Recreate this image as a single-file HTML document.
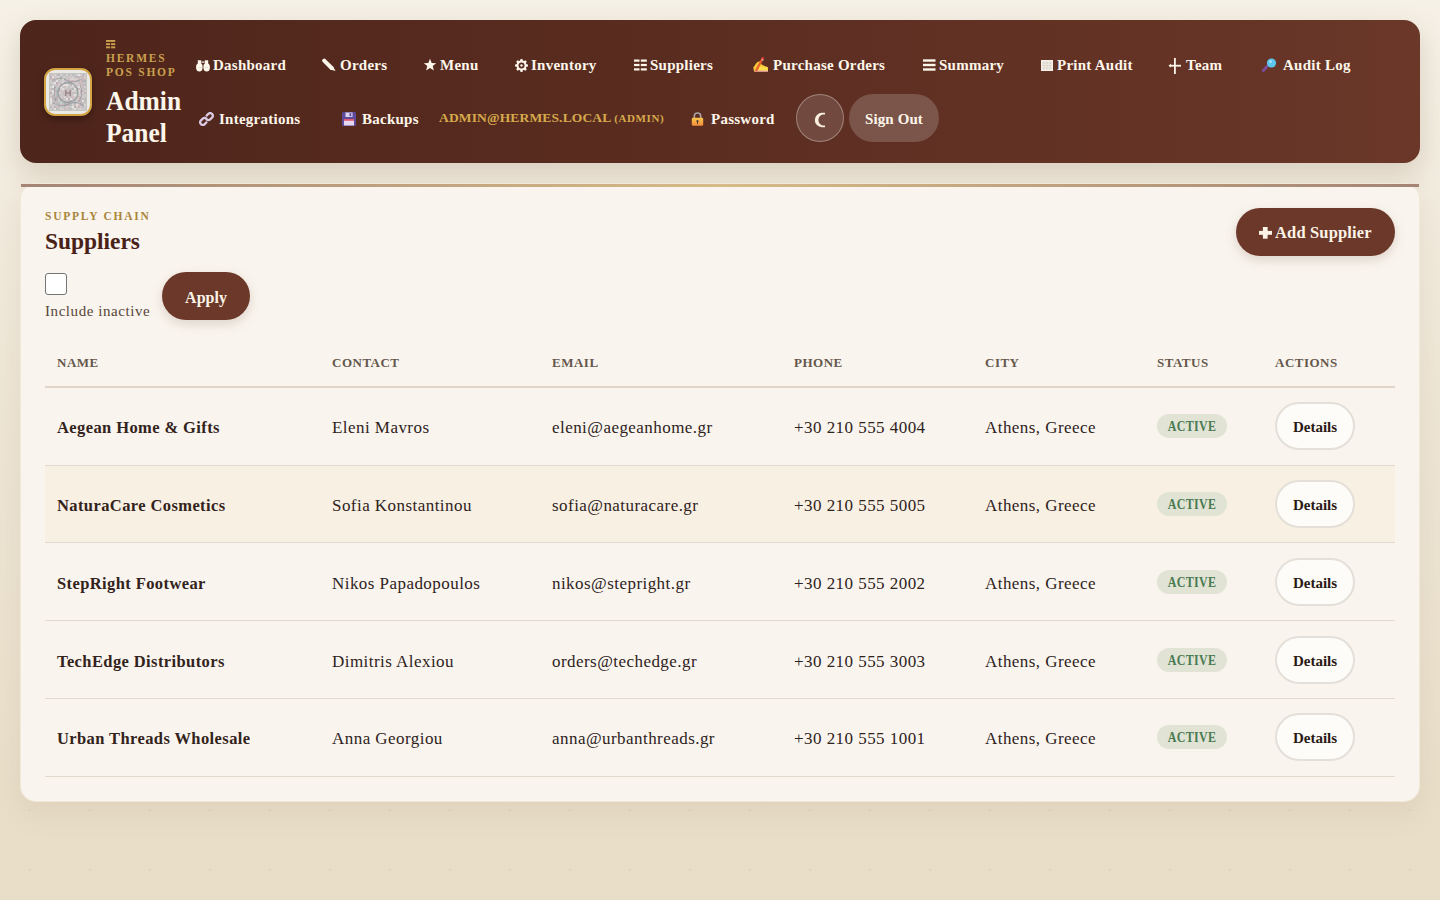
<!DOCTYPE html>
<html><head><meta charset="utf-8">
<style>
*{box-sizing:border-box;margin:0;padding:0}
html,body{width:1440px;height:900px;overflow:hidden}
body{font-family:"Liberation Serif",serif;position:relative;
background:linear-gradient(180deg,#f6f1e7 0%,#efe7d8 40%,#e8ddc6 100%);}
.dots{position:absolute;left:0;top:0;width:1440px;height:900px;
background-image:radial-gradient(circle at 30px 30px, rgba(150,120,80,0.09) 1px, transparent 1.6px);
background-size:60px 60px}
.hdr{position:absolute;left:20px;top:20px;width:1400px;height:143px;border-radius:16px;
background:linear-gradient(90deg,#4e251b 0%,#5a2c20 45%,#6a3729 100%);
box-shadow:0 10px 28px rgba(90,60,30,0.18)}
.abs{position:absolute;white-space:nowrap}
.logo{left:44px;top:68px;width:48px;height:48px;border:2px solid #d1a446;border-radius:11px;
background:#ebe9e3;box-shadow:0 3px 8px rgba(0,0,0,.35);overflow:hidden}
.logo svg{position:absolute;left:3px;top:3px}
.brand{color:#c9a04e;font-size:11.5px;letter-spacing:1.75px;font-weight:bold;line-height:14px}
.title{color:#fbf5ea;font-size:25.5px;font-weight:bold;line-height:32px;transform:scaleY(1.09);transform-origin:0 23px}
.nav{color:#fdf6ea;font-size:15px;font-weight:bold;letter-spacing:0.25px;line-height:18px}
.ic{position:absolute}
.email{color:#d6aa4c;font-size:13.5px;font-weight:bold;letter-spacing:0.15px;line-height:18px}
.email small{font-size:11px;letter-spacing:0.6px}
.moon{left:796px;top:94px;width:48px;height:48px;border-radius:50%;background:rgba(255,255,255,0.13);
border:1px solid rgba(255,255,255,0.32)}
.signout{left:849px;top:94px;width:90px;height:48px;border-radius:24px;background:rgba(255,255,255,0.18);
color:#fdf6ea;font-size:15px;font-weight:bold;letter-spacing:0.1px;line-height:50px;text-align:center}
.card{position:absolute;left:20px;top:183px;width:1400px;height:619px;border-radius:16px;border:1px solid rgba(236,226,208,0.7);
background:#f9f5ee;box-shadow:0 10px 30px rgba(120,90,50,0.10)}
.card:before{content:"";position:absolute;left:0;top:0;right:0;height:3px;
background:linear-gradient(90deg,#a48474 0%,#d6bb87 50%,#a48474 100%)}
.eyebrow{color:#a9843a;font-size:11.5px;font-weight:bold;letter-spacing:1.77px;line-height:14px}
.h1{color:#4a2117;font-size:23.4px;font-weight:bold;line-height:30px}
.chk{left:45px;top:273px;width:22px;height:22px;border:1px solid #767676;border-radius:3px;background:#fff}
.lbl{color:#574539;font-size:15px;letter-spacing:0.57px;line-height:18px}
.btn{background:#6b3829;color:#fbf3e6;font-weight:bold;text-align:center;border-radius:24px;
box-shadow:0 4px 12px rgba(107,56,41,0.18)}
.th{color:#66574d;font-size:13px;font-weight:bold;letter-spacing:0.5px;line-height:16px}
.line{position:absolute;left:45px;width:1350px;height:1px;background:#e1d9cd}
.name{color:#33231c;font-size:16.5px;font-weight:bold;letter-spacing:0.4px;line-height:20px}
.cell{color:#2f221c;font-size:17px;letter-spacing:0.45px;line-height:20px}
.badge{width:70px;height:24px;border-radius:12px;background:#e1e4d5;color:#4a7a52;font-size:12px;font-weight:bold;
letter-spacing:0.3px;line-height:24px;text-align:center}
.badge span{display:inline-block;transform:scaleY(1.15);transform-origin:50% 65%;position:relative;top:1px}
.det{width:80px;height:47.5px;border-radius:24px;border:2px solid #e4dfd8;background:#fefcf9;
color:#2a1a14;font-size:15px;font-weight:bold;line-height:46px;text-align:center}
</style></head>
<body>
<div class="dots"></div>
<div class="hdr"></div>
<div class="abs logo"><svg width="38" height="38" viewBox="0 0 38 38"><rect x="0.3" y="0.3" width="37.4" height="37.4" fill="#d3cecb"/><rect x="1" y="1" width="2" height="2" fill="#d2bec1"/><rect x="3" y="1" width="2" height="2" fill="#d2bec1"/><rect x="7" y="1" width="2" height="2" fill="#bfc5c6"/><rect x="9" y="1" width="2" height="2" fill="#bcb2b6"/><rect x="11" y="1" width="2" height="2" fill="#d9d3d2"/><rect x="13" y="1" width="2" height="2" fill="#bfc5c6"/><rect x="15" y="1" width="2" height="2" fill="#c6bcbe"/><rect x="17" y="1" width="2" height="2" fill="#d9d3d2"/><rect x="19" y="1" width="2" height="2" fill="#c4bdbf"/><rect x="21" y="1" width="2" height="2" fill="#cfc9c8"/><rect x="23" y="1" width="2" height="2" fill="#b5bfbc"/><rect x="25" y="1" width="2" height="2" fill="#bfc5c6"/><rect x="29" y="1" width="2" height="2" fill="#e6e3df"/><rect x="33" y="1" width="2" height="2" fill="#c0b8bc"/><rect x="35" y="1" width="2" height="2" fill="#ccc5c9"/><rect x="1" y="3" width="2" height="2" fill="#bcb2b6"/><rect x="3" y="3" width="2" height="2" fill="#e6e3df"/><rect x="5" y="3" width="2" height="2" fill="#ccc5c9"/><rect x="9" y="3" width="2" height="2" fill="#d9d3d2"/><rect x="11" y="3" width="2" height="2" fill="#aeb7b5"/><rect x="13" y="3" width="2" height="2" fill="#ccc5c9"/><rect x="17" y="3" width="2" height="2" fill="#bfc5c6"/><rect x="19" y="3" width="2" height="2" fill="#cfc9c8"/><rect x="21" y="3" width="2" height="2" fill="#ccc5c9"/><rect x="25" y="3" width="2" height="2" fill="#c6bcbe"/><rect x="27" y="3" width="2" height="2" fill="#c0b8bc"/><rect x="29" y="3" width="2" height="2" fill="#c0b8bc"/><rect x="31" y="3" width="2" height="2" fill="#c6bcbe"/><rect x="33" y="3" width="2" height="2" fill="#c6bcbe"/><rect x="1" y="5" width="2" height="2" fill="#c6bcbe"/><rect x="3" y="5" width="2" height="2" fill="#cbb9bc"/><rect x="5" y="5" width="2" height="2" fill="#cfc9c8"/><rect x="7" y="5" width="2" height="2" fill="#cfc9c8"/><rect x="11" y="5" width="2" height="2" fill="#b5bfbc"/><rect x="13" y="5" width="2" height="2" fill="#e6e3df"/><rect x="15" y="5" width="2" height="2" fill="#b5bfbc"/><rect x="17" y="5" width="2" height="2" fill="#cfc9c8"/><rect x="19" y="5" width="2" height="2" fill="#d2bec1"/><rect x="21" y="5" width="2" height="2" fill="#d9d3d2"/><rect x="23" y="5" width="2" height="2" fill="#d9d3d2"/><rect x="29" y="5" width="2" height="2" fill="#c6bcbe"/><rect x="33" y="5" width="2" height="2" fill="#cbb9bc"/><rect x="35" y="5" width="2" height="2" fill="#d2bec1"/><rect x="3" y="7" width="2" height="2" fill="#c9c3c7"/><rect x="5" y="7" width="2" height="2" fill="#c4bdbf"/><rect x="7" y="7" width="2" height="2" fill="#e2dfdb"/><rect x="9" y="7" width="2" height="2" fill="#bfc5c6"/><rect x="11" y="7" width="2" height="2" fill="#c9c3c7"/><rect x="15" y="7" width="2" height="2" fill="#c9c3c7"/><rect x="17" y="7" width="2" height="2" fill="#c9c3c7"/><rect x="19" y="7" width="2" height="2" fill="#c4bdbf"/><rect x="21" y="7" width="2" height="2" fill="#d2bec1"/><rect x="23" y="7" width="2" height="2" fill="#cbb9bc"/><rect x="25" y="7" width="2" height="2" fill="#cfc9c8"/><rect x="27" y="7" width="2" height="2" fill="#c0b8bc"/><rect x="29" y="7" width="2" height="2" fill="#b5bfbc"/><rect x="31" y="7" width="2" height="2" fill="#d2bec1"/><rect x="33" y="7" width="2" height="2" fill="#bcb2b6"/><rect x="35" y="7" width="2" height="2" fill="#aeb7b5"/><rect x="1" y="9" width="2" height="2" fill="#cfc9c8"/><rect x="5" y="9" width="2" height="2" fill="#e6e3df"/><rect x="7" y="9" width="2" height="2" fill="#bcb2b6"/><rect x="9" y="9" width="2" height="2" fill="#d2bec1"/><rect x="11" y="9" width="2" height="2" fill="#ccc5c9"/><rect x="13" y="9" width="2" height="2" fill="#e6e3df"/><rect x="15" y="9" width="2" height="2" fill="#ccc5c9"/><rect x="17" y="9" width="2" height="2" fill="#ccc5c9"/><rect x="19" y="9" width="2" height="2" fill="#b5bfbc"/><rect x="21" y="9" width="2" height="2" fill="#cbb9bc"/><rect x="25" y="9" width="2" height="2" fill="#ccc5c9"/><rect x="29" y="9" width="2" height="2" fill="#cbb9bc"/><rect x="31" y="9" width="2" height="2" fill="#c6bcbe"/><rect x="33" y="9" width="2" height="2" fill="#c9c3c7"/><rect x="35" y="9" width="2" height="2" fill="#bfc5c6"/><rect x="1" y="11" width="2" height="2" fill="#b5bfbc"/><rect x="5" y="11" width="2" height="2" fill="#ccc5c9"/><rect x="7" y="11" width="2" height="2" fill="#cbb9bc"/><rect x="11" y="11" width="2" height="2" fill="#cbb9bc"/><rect x="13" y="11" width="2" height="2" fill="#e6e3df"/><rect x="15" y="11" width="2" height="2" fill="#e2dfdb"/><rect x="17" y="11" width="2" height="2" fill="#e6e3df"/><rect x="21" y="11" width="2" height="2" fill="#c0b8bc"/><rect x="23" y="11" width="2" height="2" fill="#e6e3df"/><rect x="25" y="11" width="2" height="2" fill="#e2dfdb"/><rect x="27" y="11" width="2" height="2" fill="#c9c3c7"/><rect x="31" y="11" width="2" height="2" fill="#d2bec1"/><rect x="33" y="11" width="2" height="2" fill="#c6bcbe"/><rect x="35" y="11" width="2" height="2" fill="#c0b8bc"/><rect x="3" y="13" width="2" height="2" fill="#e6e3df"/><rect x="5" y="13" width="2" height="2" fill="#aeb7b5"/><rect x="7" y="13" width="2" height="2" fill="#c9c3c7"/><rect x="11" y="13" width="2" height="2" fill="#e6e3df"/><rect x="13" y="13" width="2" height="2" fill="#c9c3c7"/><rect x="15" y="13" width="2" height="2" fill="#d2bec1"/><rect x="19" y="13" width="2" height="2" fill="#bfc5c6"/><rect x="25" y="13" width="2" height="2" fill="#c6bcbe"/><rect x="29" y="13" width="2" height="2" fill="#e2dfdb"/><rect x="33" y="13" width="2" height="2" fill="#c6bcbe"/><rect x="1" y="15" width="2" height="2" fill="#d2bec1"/><rect x="3" y="15" width="2" height="2" fill="#aeb7b5"/><rect x="5" y="15" width="2" height="2" fill="#ccc5c9"/><rect x="7" y="15" width="2" height="2" fill="#bfc5c6"/><rect x="9" y="15" width="2" height="2" fill="#aeb7b5"/><rect x="13" y="15" width="2" height="2" fill="#e2dfdb"/><rect x="17" y="15" width="2" height="2" fill="#d2bec1"/><rect x="21" y="15" width="2" height="2" fill="#c0b8bc"/><rect x="23" y="15" width="2" height="2" fill="#aeb7b5"/><rect x="25" y="15" width="2" height="2" fill="#e6e3df"/><rect x="27" y="15" width="2" height="2" fill="#aeb7b5"/><rect x="29" y="15" width="2" height="2" fill="#cbb9bc"/><rect x="33" y="15" width="2" height="2" fill="#bfc5c6"/><rect x="35" y="15" width="2" height="2" fill="#c6bcbe"/><rect x="3" y="17" width="2" height="2" fill="#e2dfdb"/><rect x="5" y="17" width="2" height="2" fill="#cbb9bc"/><rect x="7" y="17" width="2" height="2" fill="#aeb7b5"/><rect x="9" y="17" width="2" height="2" fill="#c0b8bc"/><rect x="11" y="17" width="2" height="2" fill="#d2bec1"/><rect x="15" y="17" width="2" height="2" fill="#b5bfbc"/><rect x="23" y="17" width="2" height="2" fill="#e2dfdb"/><rect x="25" y="17" width="2" height="2" fill="#cfc9c8"/><rect x="27" y="17" width="2" height="2" fill="#c9c3c7"/><rect x="29" y="17" width="2" height="2" fill="#e2dfdb"/><rect x="31" y="17" width="2" height="2" fill="#c0b8bc"/><rect x="33" y="17" width="2" height="2" fill="#c6bcbe"/><rect x="1" y="19" width="2" height="2" fill="#bcb2b6"/><rect x="3" y="19" width="2" height="2" fill="#e2dfdb"/><rect x="5" y="19" width="2" height="2" fill="#ccc5c9"/><rect x="7" y="19" width="2" height="2" fill="#b5bfbc"/><rect x="9" y="19" width="2" height="2" fill="#d9d3d2"/><rect x="13" y="19" width="2" height="2" fill="#c6bcbe"/><rect x="17" y="19" width="2" height="2" fill="#b5bfbc"/><rect x="19" y="19" width="2" height="2" fill="#c0b8bc"/><rect x="23" y="19" width="2" height="2" fill="#c6bcbe"/><rect x="25" y="19" width="2" height="2" fill="#bfc5c6"/><rect x="27" y="19" width="2" height="2" fill="#b5bfbc"/><rect x="29" y="19" width="2" height="2" fill="#d9d3d2"/><rect x="31" y="19" width="2" height="2" fill="#cbb9bc"/><rect x="35" y="19" width="2" height="2" fill="#bcb2b6"/><rect x="3" y="21" width="2" height="2" fill="#c9c3c7"/><rect x="5" y="21" width="2" height="2" fill="#c9c3c7"/><rect x="7" y="21" width="2" height="2" fill="#b5bfbc"/><rect x="9" y="21" width="2" height="2" fill="#c9c3c7"/><rect x="11" y="21" width="2" height="2" fill="#c9c3c7"/><rect x="13" y="21" width="2" height="2" fill="#cfc9c8"/><rect x="15" y="21" width="2" height="2" fill="#c0b8bc"/><rect x="19" y="21" width="2" height="2" fill="#cfc9c8"/><rect x="25" y="21" width="2" height="2" fill="#e2dfdb"/><rect x="27" y="21" width="2" height="2" fill="#d9d3d2"/><rect x="33" y="21" width="2" height="2" fill="#c9c3c7"/><rect x="1" y="23" width="2" height="2" fill="#c9c3c7"/><rect x="3" y="23" width="2" height="2" fill="#c0b8bc"/><rect x="7" y="23" width="2" height="2" fill="#bcb2b6"/><rect x="9" y="23" width="2" height="2" fill="#d2bec1"/><rect x="13" y="23" width="2" height="2" fill="#ccc5c9"/><rect x="15" y="23" width="2" height="2" fill="#e2dfdb"/><rect x="17" y="23" width="2" height="2" fill="#c0b8bc"/><rect x="19" y="23" width="2" height="2" fill="#e2dfdb"/><rect x="21" y="23" width="2" height="2" fill="#c6bcbe"/><rect x="23" y="23" width="2" height="2" fill="#d2bec1"/><rect x="27" y="23" width="2" height="2" fill="#cfc9c8"/><rect x="29" y="23" width="2" height="2" fill="#cbb9bc"/><rect x="31" y="23" width="2" height="2" fill="#c4bdbf"/><rect x="35" y="23" width="2" height="2" fill="#cfc9c8"/><rect x="1" y="25" width="2" height="2" fill="#e6e3df"/><rect x="3" y="25" width="2" height="2" fill="#c0b8bc"/><rect x="5" y="25" width="2" height="2" fill="#aeb7b5"/><rect x="7" y="25" width="2" height="2" fill="#bcb2b6"/><rect x="11" y="25" width="2" height="2" fill="#b5bfbc"/><rect x="13" y="25" width="2" height="2" fill="#d2bec1"/><rect x="15" y="25" width="2" height="2" fill="#c9c3c7"/><rect x="17" y="25" width="2" height="2" fill="#e6e3df"/><rect x="19" y="25" width="2" height="2" fill="#bcb2b6"/><rect x="21" y="25" width="2" height="2" fill="#e6e3df"/><rect x="23" y="25" width="2" height="2" fill="#c9c3c7"/><rect x="25" y="25" width="2" height="2" fill="#cbb9bc"/><rect x="29" y="25" width="2" height="2" fill="#cbb9bc"/><rect x="31" y="25" width="2" height="2" fill="#bfc5c6"/><rect x="33" y="25" width="2" height="2" fill="#c6bcbe"/><rect x="35" y="25" width="2" height="2" fill="#b5bfbc"/><rect x="1" y="27" width="2" height="2" fill="#e6e3df"/><rect x="3" y="27" width="2" height="2" fill="#d2bec1"/><rect x="5" y="27" width="2" height="2" fill="#bcb2b6"/><rect x="7" y="27" width="2" height="2" fill="#c4bdbf"/><rect x="9" y="27" width="2" height="2" fill="#cfc9c8"/><rect x="11" y="27" width="2" height="2" fill="#b5bfbc"/><rect x="17" y="27" width="2" height="2" fill="#cfc9c8"/><rect x="19" y="27" width="2" height="2" fill="#c4bdbf"/><rect x="21" y="27" width="2" height="2" fill="#aeb7b5"/><rect x="25" y="27" width="2" height="2" fill="#bfc5c6"/><rect x="27" y="27" width="2" height="2" fill="#c9c3c7"/><rect x="29" y="27" width="2" height="2" fill="#cbb9bc"/><rect x="31" y="27" width="2" height="2" fill="#c0b8bc"/><rect x="33" y="27" width="2" height="2" fill="#e6e3df"/><rect x="35" y="27" width="2" height="2" fill="#c0b8bc"/><rect x="1" y="29" width="2" height="2" fill="#e2dfdb"/><rect x="3" y="29" width="2" height="2" fill="#b5bfbc"/><rect x="5" y="29" width="2" height="2" fill="#c9c3c7"/><rect x="7" y="29" width="2" height="2" fill="#c0b8bc"/><rect x="9" y="29" width="2" height="2" fill="#b5bfbc"/><rect x="13" y="29" width="2" height="2" fill="#b5bfbc"/><rect x="15" y="29" width="2" height="2" fill="#aeb7b5"/><rect x="17" y="29" width="2" height="2" fill="#cbb9bc"/><rect x="19" y="29" width="2" height="2" fill="#aeb7b5"/><rect x="21" y="29" width="2" height="2" fill="#cfc9c8"/><rect x="23" y="29" width="2" height="2" fill="#c9c3c7"/><rect x="25" y="29" width="2" height="2" fill="#aeb7b5"/><rect x="27" y="29" width="2" height="2" fill="#c9c3c7"/><rect x="31" y="29" width="2" height="2" fill="#c0b8bc"/><rect x="33" y="29" width="2" height="2" fill="#c4bdbf"/><rect x="35" y="29" width="2" height="2" fill="#c9c3c7"/><rect x="3" y="31" width="2" height="2" fill="#ccc5c9"/><rect x="9" y="31" width="2" height="2" fill="#b5bfbc"/><rect x="11" y="31" width="2" height="2" fill="#d2bec1"/><rect x="13" y="31" width="2" height="2" fill="#c6bcbe"/><rect x="15" y="31" width="2" height="2" fill="#aeb7b5"/><rect x="17" y="31" width="2" height="2" fill="#bcb2b6"/><rect x="19" y="31" width="2" height="2" fill="#c0b8bc"/><rect x="21" y="31" width="2" height="2" fill="#b5bfbc"/><rect x="25" y="31" width="2" height="2" fill="#c6bcbe"/><rect x="27" y="31" width="2" height="2" fill="#e2dfdb"/><rect x="29" y="31" width="2" height="2" fill="#d2bec1"/><rect x="31" y="31" width="2" height="2" fill="#bcb2b6"/><rect x="33" y="31" width="2" height="2" fill="#b5bfbc"/><rect x="35" y="31" width="2" height="2" fill="#d9d3d2"/><rect x="1" y="33" width="2" height="2" fill="#c4bdbf"/><rect x="5" y="33" width="2" height="2" fill="#bcb2b6"/><rect x="7" y="33" width="2" height="2" fill="#d2bec1"/><rect x="9" y="33" width="2" height="2" fill="#c6bcbe"/><rect x="13" y="33" width="2" height="2" fill="#bfc5c6"/><rect x="15" y="33" width="2" height="2" fill="#c6bcbe"/><rect x="19" y="33" width="2" height="2" fill="#d2bec1"/><rect x="23" y="33" width="2" height="2" fill="#e6e3df"/><rect x="25" y="33" width="2" height="2" fill="#bcb2b6"/><rect x="27" y="33" width="2" height="2" fill="#cfc9c8"/><rect x="29" y="33" width="2" height="2" fill="#c0b8bc"/><rect x="31" y="33" width="2" height="2" fill="#ccc5c9"/><rect x="33" y="33" width="2" height="2" fill="#c4bdbf"/><rect x="35" y="33" width="2" height="2" fill="#ccc5c9"/><rect x="1" y="35" width="2" height="2" fill="#cfc9c8"/><rect x="3" y="35" width="2" height="2" fill="#bfc5c6"/><rect x="5" y="35" width="2" height="2" fill="#e6e3df"/><rect x="7" y="35" width="2" height="2" fill="#b5bfbc"/><rect x="9" y="35" width="2" height="2" fill="#bfc5c6"/><rect x="15" y="35" width="2" height="2" fill="#cbb9bc"/><rect x="17" y="35" width="2" height="2" fill="#ccc5c9"/><rect x="19" y="35" width="2" height="2" fill="#c4bdbf"/><rect x="21" y="35" width="2" height="2" fill="#b5bfbc"/><rect x="25" y="35" width="2" height="2" fill="#e2dfdb"/><rect x="27" y="35" width="2" height="2" fill="#c9c3c7"/><rect x="33" y="35" width="2" height="2" fill="#cfc9c8"/><rect x="35" y="35" width="2" height="2" fill="#cfc9c8"/><path d="M3 8 Q10 3 17 7 T33 6 M4 30 Q12 35 20 31 T35 33 M6 14 Q4 22 7 28 M31 12 Q35 20 30 29" fill="none" stroke="#8f8a92" stroke-width="0.9" opacity="0.7"/><circle cx="19" cy="19.5" r="10" fill="none" stroke="#8c949a" stroke-width="1.3" opacity="0.75"/><circle cx="19" cy="20" r="5" fill="#c8bfbf" opacity="0.85"/><path d="M16.8 17 V23 M21.2 17 V23 M16.8 20 H21.2" stroke="#85656f" stroke-width="1.1" opacity="0.85"/><rect x="0.5" y="0.5" width="37" height="37" fill="none" stroke="#c2c4c2" stroke-width="1"/></svg></div>
<svg class="ic" style="left:106px;top:40px" width="10" height="9" viewBox="0 0 10 9"><g fill="#c9a04e"><rect x="0" y="0" width="9.2" height="1.9"/><rect x="0" y="3.2" width="4.1" height="1.9"/><rect x="5.1" y="3.2" width="4.1" height="1.9"/><rect x="0" y="6.4" width="4.1" height="1.9"/><rect x="5.1" y="6.4" width="4.1" height="1.9"/></g></svg>
<div class="abs brand" style="left:106px;top:51px">HERMES</div>
<div class="abs brand" style="left:106px;top:65px">POS SHOP</div>
<div class="abs title" style="left:106px;top:86px">Admin</div>
<div class="abs title" style="left:106px;top:118px">Panel</div>

<!-- nav icons row 1 -->
<svg class="ic" style="left:196px;top:59px" width="14" height="13" viewBox="0 0 14 13"><g fill="#fdf6ea"><path d="M1.8 1.2 H5.2 V4.6 C6.6 5.6 6.7 7 6.6 8.8 A3.25 3.6 0 0 1 0.1 8.8 C0 7 0.3 5.6 1.8 4.6 Z"/><path d="M8.8 1.2 H12.2 V4.6 C13.7 5.6 14 7 13.9 8.8 A3.25 3.6 0 0 1 7.4 8.8 C7.3 7 7.4 5.6 8.8 4.6 Z"/></g><g fill="#c9b8b0" opacity="0.6"><rect x="2.2" y="8" width="1.2" height="0.8"/><rect x="4" y="8" width="1.2" height="0.8"/><rect x="9" y="8" width="1.2" height="0.8"/><rect x="10.8" y="8" width="1.2" height="0.8"/></g><rect x="5.5" y="2.5" width="3" height="1.2" fill="#fdf6ea"/></svg>
<svg class="ic" style="left:322px;top:58px" width="15" height="14" viewBox="0 0 15 14"><path d="M2.2 2.6 L9.6 10" stroke="#fdf6ea" stroke-width="4" stroke-linecap="round"/><path d="M8.2 11.4 L11 8.6 L13.6 13.1 Z" fill="#fdf6ea"/></svg>
<svg class="ic" style="left:423px;top:58px" width="14" height="14" viewBox="0 0 14 14">
<path d="M7 0.8 L8.7 5 L13.2 5.2 L9.7 8.1 L10.9 12.6 L7 10.1 L3.1 12.6 L4.3 8.1 L0.8 5.2 L5.3 5 Z" fill="#fdf6ea"/>
</svg>
<svg class="ic" style="left:515px;top:59px" width="13" height="13" viewBox="0 0 13 13"><g fill="#fdf6ea"><circle cx="6.5" cy="6.5" r="5"/><rect x="5.2" y="0" width="2.6" height="13" rx="1"/><rect x="0" y="5.2" width="13" height="2.6" rx="1"/><rect x="5.2" y="0" width="2.6" height="13" rx="1" transform="rotate(45 6.5 6.5)"/><rect x="5.2" y="0" width="2.6" height="13" rx="1" transform="rotate(-45 6.5 6.5)"/></g><circle cx="6.5" cy="6.5" r="3" fill="#57291f"/><circle cx="6.5" cy="6.5" r="1.2" fill="#fdf6ea"/></svg>
<svg class="ic" style="left:634px;top:59px" width="13" height="12" viewBox="0 0 13 12">
<g fill="#fdf6ea"><rect x="0" y="0.5" width="5.5" height="2.2"/><rect x="6.8" y="0.5" width="6" height="2.2"/>
<rect x="0" y="4.9" width="5.5" height="2.2"/><rect x="6.8" y="4.9" width="6" height="2.2"/>
<rect x="0" y="9.3" width="5.5" height="2.2"/><rect x="6.8" y="9.3" width="6" height="2.2"/></g>
</svg>
<svg class="ic" style="left:753px;top:57px" width="16" height="15" viewBox="0 0 16 15"><path d="M0.3 10.5 L3.8 5.5 L6.5 4.2 L9 7.8 L14.8 10.2 L15 14.6 L1 14.6 Z" fill="#f7c93a"/><path d="M6 9.5 L14.8 10.2 L15 14 L5 14 Z" fill="#fbdc4a"/><rect x="1.5" y="13.6" width="13.5" height="1" fill="#f2a2c2"/><path d="M9.6 1.6 L3 14" stroke="#ea5d2f" stroke-width="2.2"/><path d="M9.4 1.9 L10.3 0.3" stroke="#e8403a" stroke-width="2.2"/><rect x="8.6" y="2.4" width="2" height="1" fill="#d8c8e8" transform="rotate(28 9.6 2.9)"/></svg>
<svg class="ic" style="left:923px;top:59px" width="13" height="12" viewBox="0 0 13 12">
<g fill="#fdf6ea"><rect x="0" y="0.3" width="12.5" height="2.4"/><rect x="0" y="4.8" width="12.5" height="2.4"/><rect x="0" y="9.3" width="12.5" height="2.4"/></g>
</svg>
<svg class="ic" style="left:1041px;top:60px" width="12" height="11" viewBox="0 0 12 11">
<rect x="0" y="0" width="12" height="11" fill="#f4efe8"/>
<g stroke="#c9c2ba" stroke-width="0.5"><path d="M3 1V10M6 1V10M9 1V10M1 3H11M1 5.5H11M1 8H11"/></g>
</svg>
<svg class="ic" style="left:1168px;top:58px" width="14" height="16" viewBox="0 0 14 16">
<g fill="#fdf6ea"><rect x="6" y="0" width="1.8" height="16"/><rect x="1.5" y="6.8" width="11.5" height="1.8"/><path d="M0.5 7.7 L3 5.8 L3 9.6 Z"/></g>
</svg>
<svg class="ic" style="left:1262px;top:58px" width="15" height="14" viewBox="0 0 15 14">
<path d="M1.2 12.8 L5.2 8.3" stroke="#7d4b97" stroke-width="2.8" stroke-linecap="round"/>
<circle cx="9.5" cy="5" r="4.6" fill="#5cc6ee"/><circle cx="8.6" cy="3.6" r="1.4" fill="#a8e4f8"/>
</svg>

<div class="abs nav" style="left:213px;top:56px">Dashboard</div>
<div class="abs nav" style="left:340px;top:56px">Orders</div>
<div class="abs nav" style="left:440px;top:56px">Menu</div>
<div class="abs nav" style="left:531px;top:56px">Inventory</div>
<div class="abs nav" style="left:650px;top:56px">Suppliers</div>
<div class="abs nav" style="left:773px;top:56px">Purchase Orders</div>
<div class="abs nav" style="left:939px;top:56px">Summary</div>
<div class="abs nav" style="left:1057px;top:56px">Print Audit</div>
<div class="abs nav" style="left:1186px;top:56px">Team</div>
<div class="abs nav" style="left:1283px;top:56px">Audit Log</div>

<!-- row 2 -->
<svg class="ic" style="left:199px;top:112px" width="15" height="14" viewBox="0 0 15 14">
<g fill="none" stroke="#d9c9e3" stroke-width="2.2" stroke-linecap="round">
<path d="M7.6 3.6 L9.3 1.9 A2.6 2.6 0 0 1 13 5.6 L11.2 7.4 A2.6 2.6 0 0 1 7.5 7.4"/>
<path d="M7.4 10.4 L5.7 12.1 A2.6 2.6 0 0 1 2 8.4 L3.8 6.6 A2.6 2.6 0 0 1 7.5 6.6"/></g>
</svg>
<svg class="ic" style="left:342px;top:112px" width="14" height="14" viewBox="0 0 14 14">
<rect x="0" y="0" width="14" height="14" rx="1.5" fill="#5d4a9a"/>
<rect x="3.5" y="0.5" width="7" height="4.5" fill="#d9d2ec"/><rect x="7.5" y="1.2" width="1.8" height="3" fill="#5d4a9a"/>
<rect x="2" y="7" width="10" height="6.5" fill="#e6d6ee"/><rect x="2" y="7" width="10" height="1.8" fill="#e0566c"/>
</svg>
<svg class="ic" style="left:691px;top:112px" width="13" height="14" viewBox="0 0 13 14">
<path d="M3.3 6 V4.2 A3.2 3.2 0 0 1 9.7 4.2 V6" fill="none" stroke="#a9a3a6" stroke-width="1.6"/>
<defs><linearGradient id="lk" x1="0" y1="0" x2="0" y2="1"><stop offset="0" stop-color="#fbc84a"/><stop offset="1" stop-color="#f28a3a"/></linearGradient></defs>
<rect x="0.8" y="5.8" width="11.4" height="8" rx="1.2" fill="url(#lk)"/>
<circle cx="6.5" cy="9.2" r="1.1" fill="#4a3a3a"/><rect x="6" y="9.5" width="1" height="2.4" fill="#4a3a3a"/>
</svg>

<div class="abs nav" style="left:219px;top:110px">Integrations</div>
<div class="abs nav" style="left:362px;top:110px">Backups</div>
<div class="abs email" style="left:439px;top:108.5px">ADMIN@HERMES.LOCAL <small>(ADMIN)</small></div>
<div class="abs nav" style="left:711px;top:110px">Password</div>
<div class="abs moon"><svg style="position:absolute;left:17px;top:17px" width="12" height="16" viewBox="0 0 12 16"><path d="M11 0.8 L8 0.8 A7.2 7.2 0 0 0 8 15.2 L11 15.2 L11 13.4 L9 13.4 A4.6 5.4 0 0 1 9 2.6 L11 2.6 Z" fill="#f8efdc"/></svg></div>
<div class="abs signout">Sign Out</div>

<!-- card -->
<div class="card"></div>
<div class="abs eyebrow" style="left:45px;top:209px">SUPPLY CHAIN</div>
<div class="abs h1" style="left:45px;top:226px">Suppliers</div>
<div class="abs chk"></div>
<div class="abs lbl" style="left:45px;top:302px">Include inactive</div>
<div class="abs btn" style="left:162px;top:272px;width:88px;height:48px;line-height:51px;font-size:16px">Apply</div>
<div class="abs btn" style="left:1236px;top:208px;width:159px;height:48px"></div><svg class="ic" style="left:1259px;top:227px" width="13" height="12" viewBox="0 0 13 12"><g fill="#fbf3e6"><rect x="3.9" y="0" width="4.7" height="11.7"/><rect x="0" y="3.9" width="13" height="3.9"/></g></svg><div class="abs" style="left:1275px;top:223px;color:#fbf3e6;font-weight:bold;font-size:16.5px;letter-spacing:0.15px;line-height:20px">Add Supplier</div>

<div class="abs th" style="left:57px;top:355px">NAME</div>
<div class="abs th" style="left:332px;top:355px">CONTACT</div>
<div class="abs th" style="left:552px;top:355px">EMAIL</div>
<div class="abs th" style="left:794px;top:355px">PHONE</div>
<div class="abs th" style="left:985px;top:355px">CITY</div>
<div class="abs th" style="left:1157px;top:355px">STATUS</div>
<div class="abs th" style="left:1275px;top:355px">ACTIONS</div>
<div class="line" style="top:386px;height:2px;background:#e0d5c8"></div>

<div class="abs" style="left:45px;top:466px;width:1350px;height:76px;background:#f8f0e3"></div>
<div class="line" style="top:465px"></div>
<div class="line" style="top:542px"></div>
<div class="line" style="top:620px"></div>
<div class="line" style="top:698px"></div>
<div class="line" style="top:776px"></div>

<div class="abs name" style="left:57px;top:418px">Aegean Home &amp; Gifts</div>
<div class="abs cell" style="left:332px;top:418px">Eleni Mavros</div>
<div class="abs cell" style="left:552px;top:418px">eleni@aegeanhome.gr</div>
<div class="abs cell" style="left:794px;top:418px">+30 210 555 4004</div>
<div class="abs cell" style="left:985px;top:418px">Athens, Greece</div>
<div class="abs badge" style="left:1157px;top:414px"><span>ACTIVE</span></div>
<div class="abs det" style="left:1275px;top:402px">Details</div>

<div class="abs name" style="left:57px;top:496px">NaturaCare Cosmetics</div>
<div class="abs cell" style="left:332px;top:496px">Sofia Konstantinou</div>
<div class="abs cell" style="left:552px;top:496px">sofia@naturacare.gr</div>
<div class="abs cell" style="left:794px;top:496px">+30 210 555 5005</div>
<div class="abs cell" style="left:985px;top:496px">Athens, Greece</div>
<div class="abs badge" style="left:1157px;top:492px"><span>ACTIVE</span></div>
<div class="abs det" style="left:1275px;top:480px">Details</div>

<div class="abs name" style="left:57px;top:574px">StepRight Footwear</div>
<div class="abs cell" style="left:332px;top:574px">Nikos Papadopoulos</div>
<div class="abs cell" style="left:552px;top:574px">nikos@stepright.gr</div>
<div class="abs cell" style="left:794px;top:574px">+30 210 555 2002</div>
<div class="abs cell" style="left:985px;top:574px">Athens, Greece</div>
<div class="abs badge" style="left:1157px;top:570px"><span>ACTIVE</span></div>
<div class="abs det" style="left:1275px;top:558px">Details</div>

<div class="abs name" style="left:57px;top:652px">TechEdge Distributors</div>
<div class="abs cell" style="left:332px;top:652px">Dimitris Alexiou</div>
<div class="abs cell" style="left:552px;top:652px">orders@techedge.gr</div>
<div class="abs cell" style="left:794px;top:652px">+30 210 555 3003</div>
<div class="abs cell" style="left:985px;top:652px">Athens, Greece</div>
<div class="abs badge" style="left:1157px;top:648px"><span>ACTIVE</span></div>
<div class="abs det" style="left:1275px;top:636px">Details</div>

<div class="abs name" style="left:57px;top:729px">Urban Threads Wholesale</div>
<div class="abs cell" style="left:332px;top:729px">Anna Georgiou</div>
<div class="abs cell" style="left:552px;top:729px">anna@urbanthreads.gr</div>
<div class="abs cell" style="left:794px;top:729px">+30 210 555 1001</div>
<div class="abs cell" style="left:985px;top:729px">Athens, Greece</div>
<div class="abs badge" style="left:1157px;top:725px"><span>ACTIVE</span></div>
<div class="abs det" style="left:1275px;top:713px">Details</div>
</body></html>
